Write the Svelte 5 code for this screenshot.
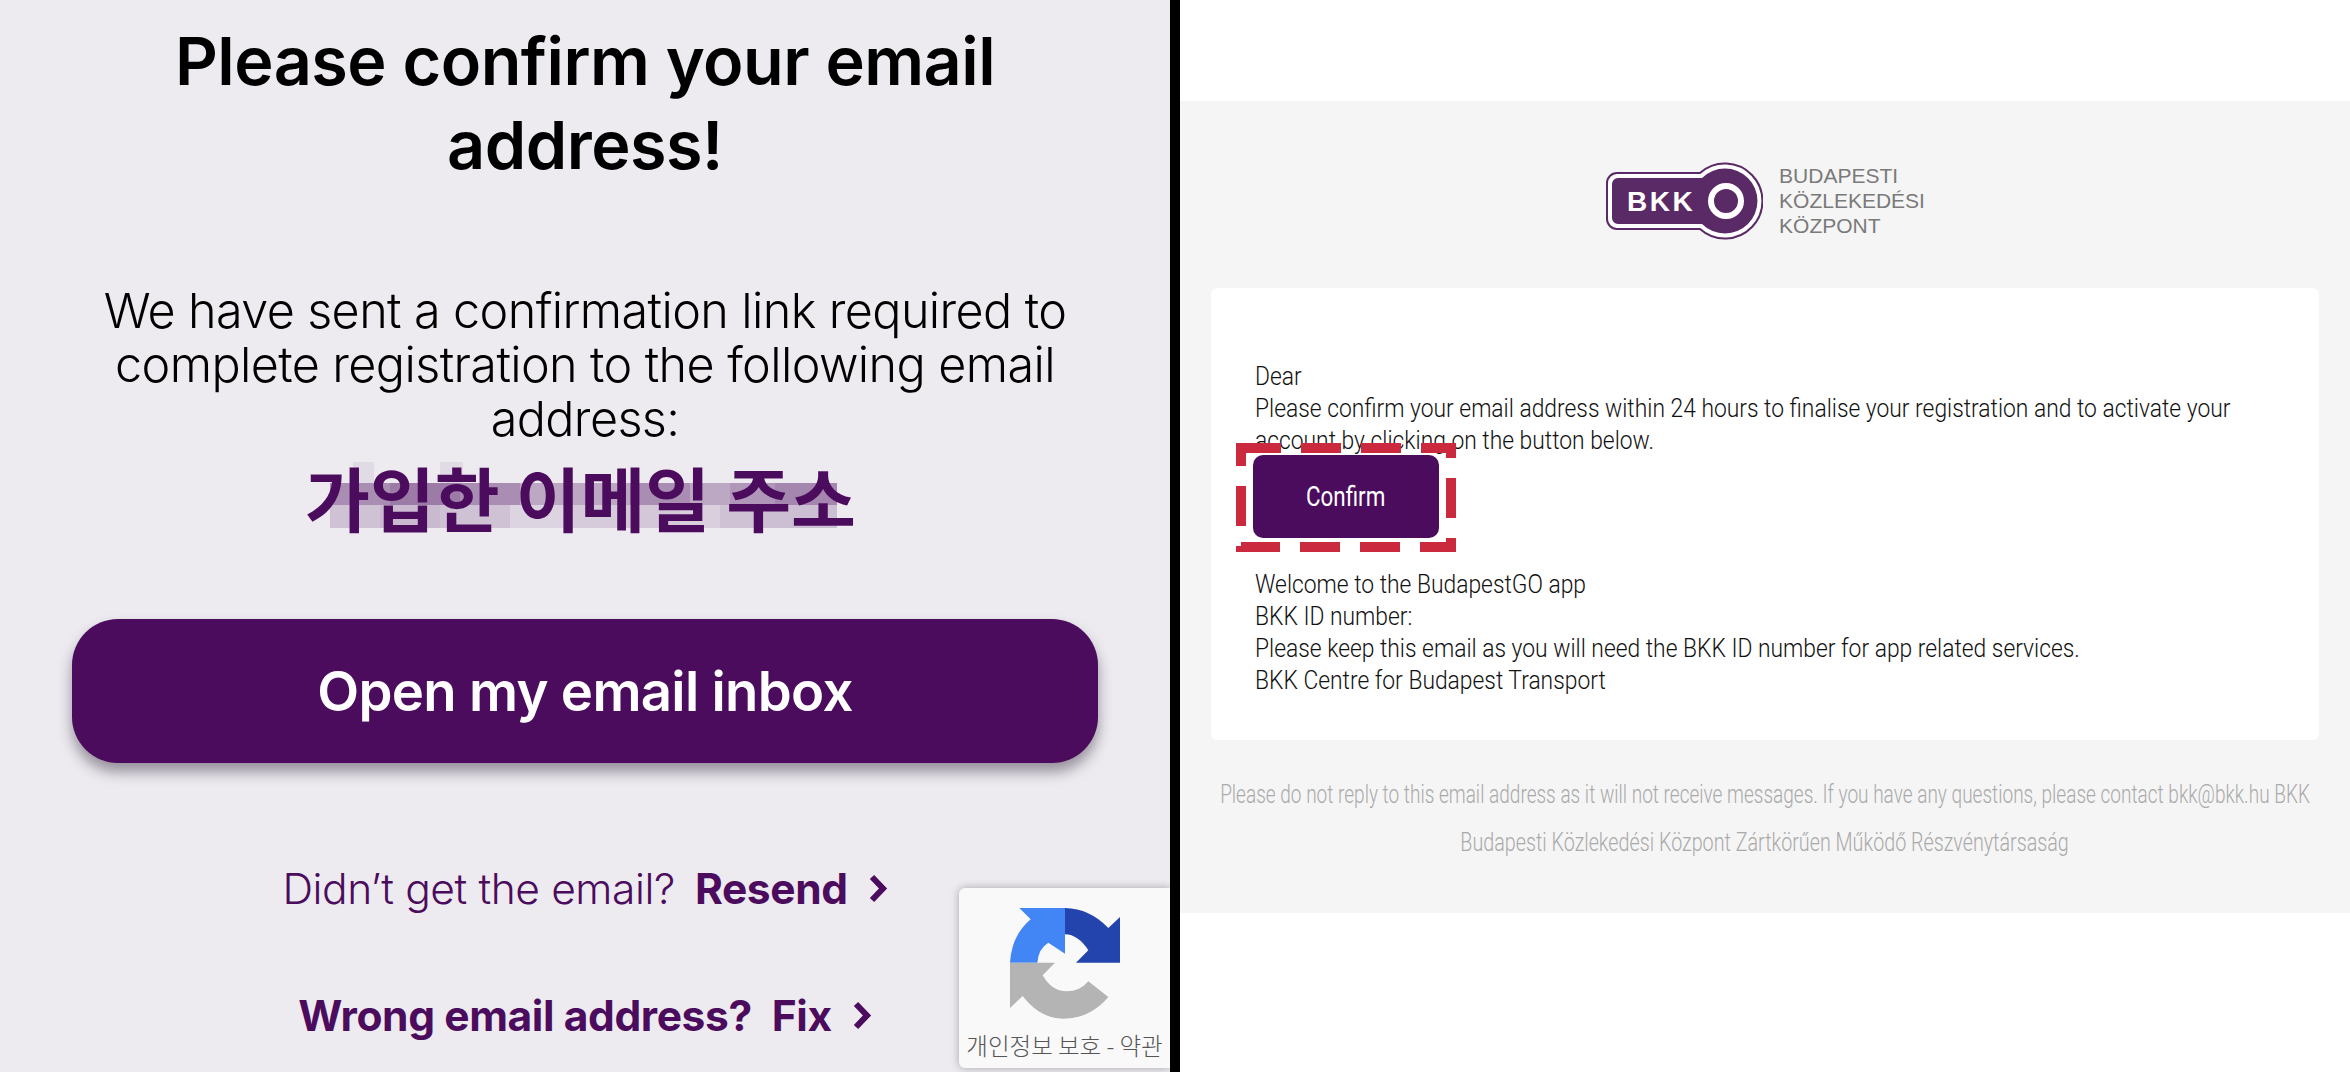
<script lang="ts">
  // blurred strip behind the redacted address: [width, opacity] per block
  const mosaicTop = [[60, 0.42], [70, 0.5], [60, 0.42], [60, 0.3], [50, 0.3], [60, 0.42], [40, 0.3], [45, 0.38], [62, 0.45]];
  const mosaicBottom = [[50, 0.18], [60, 0.22], [70, 0.18], [60, 0.1], [50, 0.14], [60, 0.16], [40, 0.12], [45, 0.18], [72, 0.2]];

  const bodyLines = [
    'Welcome to the BudapestGO app',
    'BKK ID number:',
    'Please keep this email as you will need the BKK ID number for app related services.',
    'BKK Centre for Budapest Transport',
  ];
</script>

<main class="split">
  <section class="phone">
    <h1>Please confirm your email<br />address!</h1>
    <p class="lead">We have sent a confirmation link required to<br />complete registration to the following email<br />address:</p>

    <div class="address">
      <div class="mosaic" aria-hidden="true">
        <span class="bump one"></span>
        <span class="bump two"></span>
        <div class="strip tall">
          {#each mosaicTop as [w, o]}<i style="width:{w}px;opacity:{o}"></i>{/each}
        </div>
        <div class="strip">
          {#each mosaicBottom as [w, o]}<i style="width:{w}px;opacity:{o}"></i>{/each}
        </div>
      </div>
      <span class="address-text">가입한 이메일 주소</span>
    </div>

    <button class="inbox">Open my email inbox</button>

    <div class="link first">
      <span class="light">Didn’t get the email?</span>
      <b>Resend</b>
      <svg width="20" height="29" viewBox="0 0 20 29"><path d="M4 3l11 11.5-11 11.5" /></svg>
    </div>
    <div class="link second">
      <b>Wrong email address?</b>
      <b>Fix</b>
      <svg width="20" height="29" viewBox="0 0 20 29"><path d="M4 3l11 11.5-11 11.5" /></svg>
    </div>

    <div class="recaptcha">
      <svg class="rc-logo" width="110" height="112" viewBox="210 115 330 336">
        <path fill="#4285f4" d="M375 118 L238 118 L272 152 Q215 200 210 282 L292 282 Q295 240 325 222 L375 255 Z" />
        <path fill="#2343ad" d="M375 118 Q450 120 505 178 L540 145 L540 282 L408 282 L445 245 Q415 198 375 197 Z" />
        <path fill="#b4b4b4" d="M210 282 L345 282 L308 320 Q335 368 380 368 Q420 368 445 338 L505 385 Q450 450 370 450 Q300 450 248 382 L210 418 Z" />
      </svg>
      <span class="rc-text">개인정보 보호 - 약관</span>
    </div>
  </section>

  <section class="mail">
    <div class="mail-bg">
      <div class="brand">
        <svg width="158" height="78" viewBox="0 0 158 78">
          <path fill="#fff" stroke="#5a2a66" stroke-width="2" d="M12 11 H95 A37.5 37.5 0 1 1 95 67 H12 A10 10 0 0 1 2 57 V21 A10 10 0 0 1 12 11 Z" />
          <path fill="#5a2a66" d="M13 16 H97 A32.5 32.5 0 1 1 97 62 H13 A6 6 0 0 1 7 56 V22 A6 6 0 0 1 13 16 Z" />
          <circle cx="121" cy="39" r="15" fill="none" stroke="#fff" stroke-width="6" />
          <text x="22" y="49" class="bkk">BKK</text>
        </svg>
        <div class="brand-name">BUDAPESTI<br />KÖZLEKEDÉSI<br />KÖZPONT</div>
      </div>

      <article class="card">
        <p>Dear<br />Please confirm your email address within 24 hours to finalise your registration and to activate your<br />account by clicking on the button below.</p>
        <div class="confirm-wrap">
          <div class="confirm"><span>Confirm</span></div>
          <svg class="dashes" width="220" height="109" viewBox="0 0 220 109">
            <rect x="5" y="5" width="210" height="99" fill="none" stroke="#cb2a3e" stroke-width="10" stroke-dasharray="40 20" />
          </svg>
        </div>
        <p>
          {#each bodyLines as line}{line}<br />{/each}
        </p>
      </article>

      <footer>
        <div class="notice">Please do not reply to this email address as it will not receive messages. If you have any questions, please contact bkk@bkk.hu BKK</div>
        <div class="company">Budapesti Közlekedési Központ Zártkörűen Működő Részvénytársaság</div>
      </footer>
    </div>
  </section>
</main>

<style>
  :global(body) { margin: 0; background: #fff; }

  .split {
    display: flex;
    width: 2350px;
    height: 1072px;
    overflow: hidden;
  }

  .phone {
    position: relative;
    box-sizing: border-box;
    width: 1170px;
    flex: none;
    padding-top: 19px;
    background: #edebf0;
    border: 0;
    text-align: center;
    font-family: Inter, "Noto Sans CJK KR", sans-serif;
    color: #000;
  }
  h1 {
    margin: 0;
    font-size: 66.5px;
    line-height: 84px;
    font-weight: 600;
    letter-spacing: -0.5px;
  }
  .lead {
    margin: 97px 0 0;
    font-size: 48.5px;
    line-height: 54px;
    font-weight: 300;
    letter-spacing: -0.6px;
  }
  .address {
    position: relative;
    margin-top: 19px;
    height: 80px;
    padding-right: 9px;
    line-height: 63px;
  }
  .address-text {
    position: relative;
    font-family: "Noto Sans CJK KR", sans-serif;
    font-size: 70.5px;
    font-weight: 700;
    color: #4c0c5e;
  }
  .mosaic {
    position: absolute;
    left: 330px;
    top: 18px;
    width: 507px;
  }
  .strip { display: flex; height: 23px; }
  .strip.tall { height: 22px; }
  .strip i { display: block; background: #4c0c5e; }
  .bump {
    position: absolute;
    bottom: 45px;
    height: 21px;
    background: #4c0c5e;
    opacity: 0.07;
  }
  .bump.one { left: 23px; width: 21px; }
  .bump.two { left: 110px; width: 23px; }

  .inbox {
    display: block;
    box-sizing: border-box;
    width: 1026px;
    height: 144px;
    margin: 74px 0 0 72px;
    padding: 0;
    border: 0;
    border-radius: 46px;
    background: #4c0c5e;
    color: #fff;
    font-family: inherit;
    font-size: 54.5px;
    font-weight: 600;
    letter-spacing: -0.7px;
    box-shadow: 0 9px 14px rgba(30, 20, 40, 0.42);
  }

  .link {
    display: flex;
    justify-content: center;
    align-items: center;
    gap: 20px;
    height: 60px;
    font-size: 42.5px;
    color: #4c0c5e;
    letter-spacing: -0.4px;
  }
  .link.first { margin-top: 95px; }
  .link.second { margin-top: 67px; }
  .link b { font-weight: 700; }
  .link .light { font-weight: 300; }
  .link svg { fill: none; stroke: #4c0c5e; stroke-width: 6; }

  .recaptcha {
    position: absolute;
    left: 959px;
    top: 888px;
    width: 211px;
    height: 180px;
    display: flex;
    flex-direction: column;
    align-items: center;
    background: #f9f9f9;
    border-radius: 6px 0 0 6px;
    box-shadow: 0 0 8px rgba(0, 0, 0, 0.3);
  }
  .rc-logo { margin-top: 19px; }
  .rc-text {
    margin-top: 10px;
    font-family: "Noto Sans CJK KR", sans-serif;
    font-size: 23.5px;
    font-weight: 300;
    line-height: 32px;
    color: #555;
    white-space: nowrap;
  }

  .mail {
    flex: 1;
    min-width: 0;
    box-sizing: border-box;
    border-left: 10px solid #000;
    padding-top: 101px;
    background: #fff;
  }
  .mail-bg {
    height: 812px;
    background: #f5f5f5;
    padding: 0 31px;
    box-sizing: border-box;
    font-family: Roboto, sans-serif;
    font-weight: 300;
  }
  .brand {
    display: flex;
    justify-content: center;
    align-items: center;
    gap: 16px;
    padding-top: 61px;
    height: 78px;
  }
  .bkk {
    font-family: "Liberation Sans", sans-serif;
    font-size: 28px;
    font-weight: 700;
    letter-spacing: 2.5px;
    fill: #fff;
  }
  .brand-name {
    font-family: "Liberation Sans", sans-serif;
    font-size: 21px;
    line-height: 25px;
    color: #7a7a7a;
    margin-top: -2px;
  }
  .card {
    margin-top: 48px;
    height: 452px;
    box-sizing: border-box;
    padding: 72px 44px 44px;
    background: #fff;
    border-radius: 6px;
    font-size: 26px;
    line-height: 32px;
    color: #111;
  }
  /* the mail's condensed webfont isn't installed, so squeeze Roboto to its widths */
  .card p {
    margin: 0;
    width: 1200px;
    white-space: nowrap;
    transform: scaleX(0.878);
    transform-origin: left;
  }
  .confirm-wrap {
    position: relative;
    width: 186px;
    margin: -1px 0 30px -2px;
  }
  .confirm {
    height: 83px;
    line-height: 84px;
    border-radius: 10px;
    background: #4c0c5e;
    color: #fff;
    text-align: center;
    font-size: 28px;
    font-weight: 400;
  }
  .confirm span { display: inline-block; transform: scaleX(0.8); }
  .dashes { position: absolute; left: -17px; top: -12px; }
  footer {
    display: flex;
    flex-direction: column;
    align-items: center;
    margin-top: 31px;
    font-size: 25px;
    line-height: 48px;
    color: #aaa;
    white-space: nowrap;
  }
  .notice { transform: scaleX(0.761); }
  .company { transform: scaleX(0.789); }
</style>
